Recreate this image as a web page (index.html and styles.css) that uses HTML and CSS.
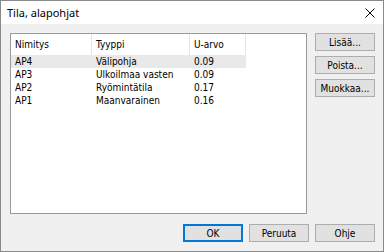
FILE: index.html
```html
<!DOCTYPE html>
<html lang="fi">
<head>
<meta charset="utf-8">
<link rel="stylesheet" href="styles.css">
</head>
<body>
<div class="window">
  <div class="titlebar">
    <span class="title">Tila, alapohjat</span>
    <svg class="close" width="10" height="10" viewBox="0 0 10 10"><path d="M0.5 0.5 L9.5 9.5 M9.5 0.5 L0.5 9.5" stroke="#000" stroke-width="1" fill="none"/></svg>
  </div>
  <div class="body">
    <div class="main">
      <div class="list">
        <div class="row header">
          <div class="c c1">Nimitys</div>
          <div class="c c2">Tyyppi</div>
          <div class="c c3">U-arvo</div>
        </div>
        <div class="row item selected">
          <div class="c c1">AP4</div>
          <div class="c c2">Välipohja</div>
          <div class="c c3">0.09</div>
        </div>
        <div class="row item">
          <div class="c c1">AP3</div>
          <div class="c c2">Ulkoilmaa vasten</div>
          <div class="c c3">0.09</div>
        </div>
        <div class="row item">
          <div class="c c1">AP2</div>
          <div class="c c2">Ryömintätila</div>
          <div class="c c3">0.17</div>
        </div>
        <div class="row item">
          <div class="c c1">AP1</div>
          <div class="c c2">Maanvarainen</div>
          <div class="c c3">0.16</div>
        </div>
      </div>
      <div class="side">
        <button class="btn">Lisää...</button>
        <button class="btn">Poista...</button>
        <button class="btn">Muokkaa...</button>
      </div>
    </div>
    <div class="footer">
      <button class="btn default">OK</button>
      <button class="btn">Peruuta</button>
      <button class="btn">Ohje</button>
    </div>
  </div>
</div>
</body>
</html>
```

FILE: styles.css
```css
html, body {
  margin: 0;
  padding: 0;
  background: #f0f0f0;
}
.window {
  width: 384px;
  height: 252px;
  box-sizing: border-box;
  border: 1px solid #8a8a8a;
  display: flex;
  flex-direction: column;
  font-family: "DejaVu Sans Condensed", "DejaVu Sans", sans-serif;
  font-size: 10px;
  color: #000;
}
.titlebar {
  height: 23px;
  background: #fff;
  display: flex;
  align-items: center;
  justify-content: space-between;
  padding: 0 8px 0 6px;
}
.title {
  font-family: "Noto Sans", "Open Sans", sans-serif;
  font-size: 11px;
  color: #000;
}
.close {
  display: block;
}
.body {
  flex: 1;
  background: #f0f0f0;
  padding: 9px 8px 9px 9px;
  display: flex;
  flex-direction: column;
  gap: 10px;
}
.main {
  display: flex;
  gap: 8px;
  height: 181px;
}
.list {
  width: 297px;
  box-sizing: border-box;
  border: 1px solid #9a9a9a;
  background: #fff;
}
.row {
  display: flex;
  height: 13px;
  align-items: center;
}
.row.header {
  height: 21px;
  align-items: stretch;
}
.row.header .c {
  display: flex;
  align-items: center;
  border-right: 1px solid #e5e5e5;
}
.row.item {
  width: 235px;
}
.row.selected {
  background: #e9e9e9;
}
.c {
  box-sizing: border-box;
  padding-left: 4px;
  white-space: nowrap;
}
.c1 { width: 81px; }
.c2 { width: 98px; }
.c3 { width: 56px; }
.side {
  display: flex;
  flex-direction: column;
  gap: 5px;
}
.btn {
  width: 60px;
  height: 18px;
  box-sizing: border-box;
  border: 1px solid #adadad;
  background: #e1e1e1;
  font-family: "DejaVu Sans Condensed", "DejaVu Sans", sans-serif;
  font-size: 10px;
  color: #000;
  padding: 0;
  margin: 0;
}
.btn.default {
  border: 1px solid #0078d7;
  box-shadow: inset 0 0 0 1px #0078d7;
}
.footer {
  display: flex;
  justify-content: flex-end;
  gap: 6px;
}
```
